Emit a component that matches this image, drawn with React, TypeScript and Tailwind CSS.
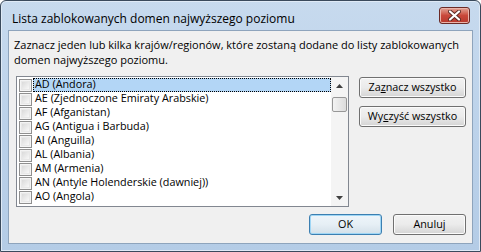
import React from "react";

const font = { fontFamily: '"Open Sans", "Noto Sans", sans-serif' };

const items = [
  "AD (Andora)",
  "AE (Zjednoczone Emiraty Arabskie)",
  "AF (Afganistan)",
  "AG (Antigua i Barbuda)",
  "AI (Anguilla)",
  "AL (Albania)",
  "AM (Armenia)",
  "AN (Antyle Holenderskie (dawniej))",
  "AO (Angola)",
];

function Checkbox() {
  return (
    <div className="w-[13px] h-[13px] border border-[#8f8f8f] bg-[#f4f4f4] p-[1px] shrink-0">
      <div className="w-full h-full bg-gradient-to-br from-[#dadada] to-[#f8f8f8] border border-[#e8e8e8]" />
    </div>
  );
}

function Button({ children, def, className = "" }: { children: React.ReactNode; def?: boolean; className?: string }) {
  return (
    <div
      className={
        "h-[21px] rounded-[3px] border flex items-center justify-center text-[10.8px] text-black leading-none " +
        (def
          ? "border-[#3c7fb1] shadow-[inset_0_0_0_1px_#9fd6f5] bg-gradient-to-b from-[#eef5fa] via-[#e6eff5] to-[#d3e0e9] "
          : "border-[#707070] shadow-[inset_0_0_0_1px_#fbfbfb] bg-gradient-to-b from-[#f2f2f2] via-[#ebebeb] to-[#d4d4d4] ") +
        className
      }
      style={font}
    >
      <span className="-mt-[1px]">{children}</span>
    </div>
  );
}

export default function App() {
  return (
    <div className="w-[481px] h-[252px] bg-white">
      <div className="w-[481px] h-[252px] border border-[#3a4a5c] rounded-t-[6px] bg-gradient-to-b from-[#c7daee] via-[#bcd2ea] to-[#b4cce6] shadow-[inset_0_0_0_1px_#dfeaf6] flex flex-col px-[7px] pb-[7px]">
        <div className="h-[29px] flex items-center justify-between shrink-0">
          <span className="text-[12px] text-black pl-[4px] pt-[7px]" style={font}>
            Lista zablokowanych domen najwyższego poziomu
          </span>
          <div className="w-[31px] h-[17px] mt-[-1px] mr-[3px] rounded-[3px] border border-[#6b2a26] bg-gradient-to-b from-[#e0a396] via-[#c9483a] to-[#b6392d] shadow-[inset_0_0_0_1px_#eab4aa] flex items-center justify-center">
            <svg width="13" height="11" viewBox="0 0 13 11">
              <path d="M2 1.5 L11 9.5 M11 1.5 L2 9.5" stroke="#5a2a24" strokeWidth="4" strokeLinecap="round" />
              <path d="M2 1.5 L11 9.5 M11 1.5 L2 9.5" stroke="#ffffff" strokeWidth="2.2" strokeLinecap="round" />
            </svg>
          </div>
        </div>
        <div className="flex-1 border border-[#8ea4bc] bg-[#f0f0f0] flex flex-col pl-[5px] pr-[6px] pt-[6px]">
          <p className="text-[11px] leading-[15px] text-black whitespace-nowrap" style={font}>
            Zaznacz jeden lub kilka krajów/regionów, które zostaną dodane do listy zablokowanych
            <br />
            domen najwyższego poziomu.
          </p>
          <div className="flex mt-[9px] pl-[2px]">
            <div className="w-[334px] h-[131px] border border-[#828790] bg-white flex">
              <div className="flex-1 pt-[1px] pl-[2px]">
                {items.map((t, i) => (
                  <div key={t} className="h-[14px] flex items-center">
                    <Checkbox />
                    <div
                      className={
                        "ml-[1px] flex-1 h-[14px] flex items-center pl-[1px] text-[10.8px] text-black " +
                        (i === 0 ? "bg-[#b3d6f6] border border-dotted border-black" : "border border-transparent")
                      }
                      style={font}
                    >
                      <span className="-mt-[1px] whitespace-nowrap">{t}</span>
                    </div>
                  </div>
                ))}
              </div>
              <div className="w-[17px] bg-[#f4f4f4] flex flex-col items-center">
                <div className="h-[17px] w-full flex items-center justify-center">
                  <svg width="7" height="4" viewBox="0 0 7 4"><path d="M0 4 L3.5 0 L7 4 Z" fill="#404040" /></svg>
                </div>
                <div className="mt-[3px] w-[15px] h-[15px] rounded-[2px] border border-[#979797] bg-gradient-to-r from-[#f3f3f3] to-[#dcdcdc]" />
                <div className="flex-1" />
                <div className="h-[17px] w-full flex items-center justify-center">
                  <svg width="7" height="4" viewBox="0 0 7 4"><path d="M0 0 L7 0 L3.5 4 Z" fill="#404040" /></svg>
                </div>
              </div>
            </div>
            <div className="flex flex-col gap-[8px] ml-[10px] mt-[1px]">
              <Button className="w-[107px]">
                Za<u>z</u>nacz wszystko
              </Button>
              <Button className="w-[107px]">
                Wy<u>c</u>zyść wszystko
              </Button>
            </div>
          </div>
          <div className="flex justify-end gap-[11px] mt-[7px]">
            <Button def className="w-[73px]">OK</Button>
            <Button className="w-[73px]">Anuluj</Button>
          </div>
        </div>
      </div>
    </div>
  );
}
